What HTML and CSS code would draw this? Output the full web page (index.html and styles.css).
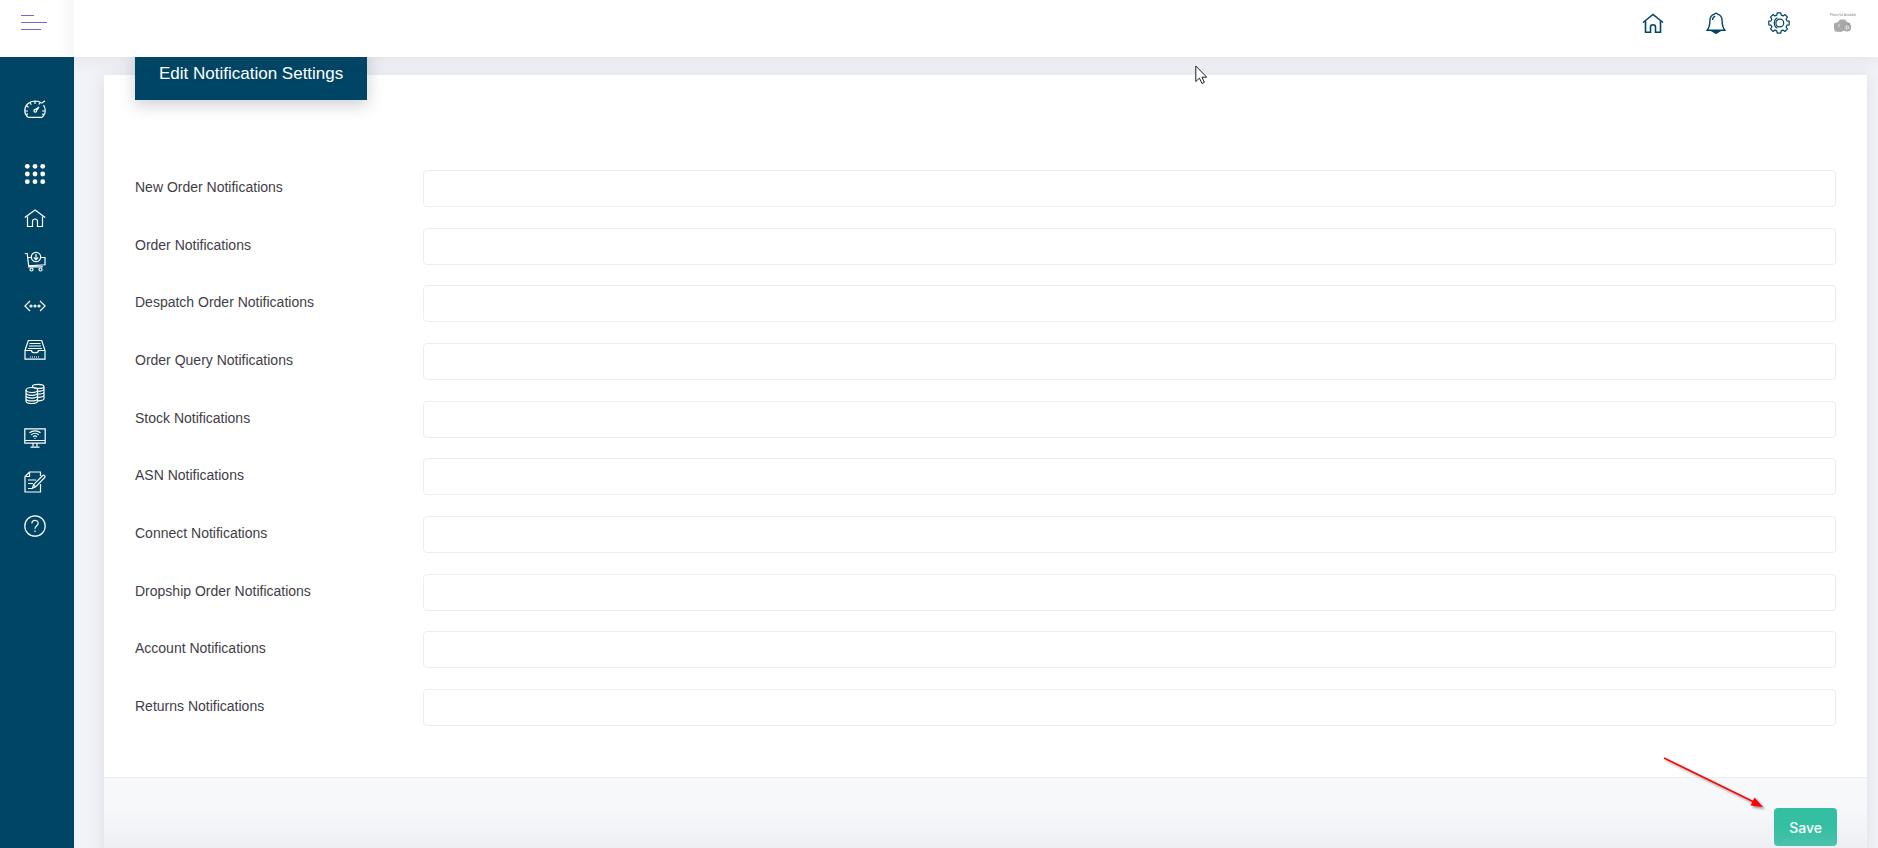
FILE: index.html
```
<!DOCTYPE html>
<html lang="en">
<head>
    <meta charset="UTF-8">
    <meta name="viewport" content="width=device-width, initial-scale=1.0">
    <title>Edit Notification Settings</title>
    <link rel="stylesheet" href="styles.css">
</head>
<body>
    <header class="topbar">
        <div class="brand">
            <button type="button" class="toggler" aria-label="Toggle menu">
                <span></span><span></span><span></span>
            </button>
        </div>
        <nav class="topnav">
            <a href="#" aria-label="Home">
                <svg viewBox="0 0 22 22" stroke-width="1.6"><path d="M1 10.5 11 2.5l10 8M3.5 9v11.2h5v-5a2.5 2.5 0 0 1 5 0v5h5V9"/></svg>
            </a>
            <a href="#" aria-label="Notifications">
                <svg viewBox="0 0 22 22" stroke-width="1.4"><path d="M9.5 2.2a1.6 1.6 0 0 1 3 0c3 .9 4.600 3.300 4.600 6.400 0 5 .6 7.200 2.700 9.600H2.200c2.100-2.400 2.700-4.600 2.700-9.600 0-3.100 1.600-5.500 4.600-6.400zM7.500 8c.1-2 1-3.300 2.700-3.900"/><path fill="currentColor" d="M7.500 19.200h7L11 21.300z"/></svg>
            </a>
            <a href="#" aria-label="Settings">
                <svg viewBox="0 0 22 22" stroke-width="1.2" stroke-linejoin="round"><path d="M9.200.8h3.600l.4 2.300 1.800.8 1.900-1.400 2.600 2.600L18.100 7l.8 1.800 2.300.4v3.600l-2.300.4-.8 1.800 1.400 1.900-2.600 2.600-1.900-1.400-1.800.8-.4 2.300H9.200l-.4-2.300-1.800-.8-1.900 1.400-2.600-2.600L3.900 15l-.8-1.800-2.300-.4V9.200l2.300-.4L3.900 7 2.500 5.100l2.600-2.600L7 3.900l1.800-.8z"/><circle cx="11.800" cy="11" r="3.900"/><path d="M9.500 5.800a5.800 5.800 0 0 0 0 10.400"/></svg>
            </a>
            <a href="#" class="avatar" aria-label="Profile">
                <span>Photo Not Available</span>
                <svg viewBox="0 0 20 14"><path fill="#a9a9a9" d="M1 4.500 5 3l2-2.500h5L14 3l3 1 1 4-2 4-4-1-4 2-6-.5-1-3z"/><circle cx="14" cy="8.500" r="3.600" fill="#b9b9b9" stroke="#999"/><path stroke="#ddd" d="M6 5v3M13.500 6.500v4M15.500 7.500v2"/></svg>
            </a>
        </nav>
    </header>

    <aside class="sidebar">
        <a href="#" class="dashboard" aria-label="Dashboard">
            <svg viewBox="0 0 22 22"><path d="M4 19.300C2.200 17.800.8 15.500.8 12.600.8 7 5.400 3 11 3c2.700 0 5 .8 6.800 2.200M19.500 7.200c1.200 1.500 1.700 3.300 1.700 5.400 0 2.900-1.200 5.200-3.200 6.700H4M11 3v3M6 4.500l1.300 2.200M2.500 8l2.200 1.200M1 13h3M18 13h3M2 16.500l2-.6M18 16l2 .6M16 4.500 14.800 6.500M18 5l3-2.300M12 11l3-2-2 3"/><circle cx="11.300" cy="12.800" r="1.400"/></svg>
        </a>
        <a href="#" aria-label="Apps">
            <svg viewBox="0 0 22 22"><g fill="currentColor" stroke="none"><circle cx="3.300" cy="3.300" r="2.400"/><circle cx="11" cy="3.300" r="2.400"/><circle cx="18.700" cy="3.300" r="2.400"/><circle cx="3.300" cy="11" r="2.400"/><circle cx="11" cy="11" r="2.400"/><circle cx="18.700" cy="11" r="2.400"/><circle cx="3.300" cy="18.700" r="2.400"/><circle cx="11" cy="18.700" r="2.400"/><circle cx="18.700" cy="18.700" r="2.400"/></g></svg>
        </a>
        <a href="#" aria-label="Home">
            <svg viewBox="0 0 22 22"><path d="M.8 10.500 11 3l10.200 7.500M3.500 9.500v10h5v-5a2.500 2.500 0 0 1 5 0v5h5v-10"/></svg>
        </a>
        <a href="#" aria-label="Orders">
            <svg viewBox="0 0 22 22"><path d="M.8 2.500h2.400l1.600 13.300h14M4 6.500h3M16.500 6.500h4.500v7.300l-16 1"/><circle cx="12" cy="6" r="4.700"/><path d="M12 3v5.500M9.800 6.500 12 8.700l2.200-2.200"/><circle cx="7.500" cy="18.500" r="1.500"/><circle cx="16.500" cy="18.500" r="1.500"/></svg>
        </a>
        <a href="#" aria-label="Integrations">
            <svg viewBox="0 0 22 22"><path d="M6 6 .9 11 6 16M16 6l5.100 5-5.100 5"/><circle cx="7" cy="11" r="1"/><circle cx="11" cy="11" r="1"/><circle cx="15" cy="11" r="1"/></svg>
        </a>
        <a href="#" aria-label="Stock">
            <svg viewBox="0 0 22 22"><path d="M1 11.500 4.300 1.500h13.400L21 11.500v8.700H1zM1 11.500h6.500c0 3 7 3 7 0H21M5.500 4.500h11M5 7h12M4 9.500h14"/><path stroke-dasharray="1 1" d="M6 18h10"/></svg>
        </a>
        <a href="#" aria-label="Accounts">
            <svg viewBox="0 0 22 22"><ellipse cx="7.800" cy="7" rx="5.800" ry="2.500"/><path d="M2 7v11c0 1.400 2.600 2.500 5.800 2.500s5.800-1.100 5.800-2.500V7M2 9.800c0 1.400 2.600 2.500 5.800 2.500s5.800-1.100 5.800-2.500M2 12.600c0 1.400 2.600 2.500 5.800 2.500s5.800-1.100 5.800-2.500M2 15.400c0 1.400 2.600 2.500 5.800 2.500s5.800-1.100 5.800-2.500M8.500 4.500V3.300c0-1.200 2.600-2 5.800-2s5.700 1 5.700 2.200v12c0 1.200-2.500 2.200-6 2.300M8.500 3.500c1 1.500 3 1.900 5.800 1.900s5.700-.7 5.700-2M13.600 8.300c3.500 0 6.400-.8 6.400-2.200M13.600 11.200c3.500 0 6.400-.8 6.400-2.200M13.600 14.300c3.500 0 6.400-.8 6.400-2.200"/></svg>
        </a>
        <a href="#" aria-label="Connect">
            <svg viewBox="0 0 22 22"><path d="M.8 1.800h20.400v14.400H.8zM.8 13.500h20.400M9 16.200v3M13 16.200v3M6.500 20.200h9"/><path d="M5.500 5.800c3-2.600 8-2.600 11 0M7.200 7.800c2.200-1.800 5.400-1.800 7.600 0M9 9.700c1.200-1 2.800-1 4 0M10.500 11.300h1"/></svg>
        </a>
        <a href="#" aria-label="Reports">
            <svg viewBox="0 0 22 22"><path d="M16.500 5V1H5.500L1 5.500V21h15.500v-8M1.500 5.500h4v-4M4 9h8M4 12.500h5M4 17.500h5M8.500 17.200l1-3.500 9.200-9.200c1.200-1 3 .7 2 2l-9 9.300zM9.800 14l2 2"/></svg>
        </a>
        <a href="#" aria-label="Help">
            <svg viewBox="0 0 22 22"><circle cx="11" cy="11" r="10.200"/><path d="M7.900 8.500c0-4.200 6.300-4 6.300-.3 0 2.500-3.200 2.600-3.200 5.600M11 15.500v1.500"/></svg>
        </a>
    </aside>

    <main class="content">
        <form class="card">
            <h1 class="card-title">Edit Notification Settings</h1>
            <div class="fields">
                <div class="row">
                    <label for="new-order">New Order Notifications</label>
                    <input type="text" id="new-order">
                </div>
                <div class="row">
                    <label for="order">Order Notifications</label>
                    <input type="text" id="order">
                </div>
                <div class="row">
                    <label for="despatch">Despatch Order Notifications</label>
                    <input type="text" id="despatch">
                </div>
                <div class="row">
                    <label for="query">Order Query Notifications</label>
                    <input type="text" id="query">
                </div>
                <div class="row">
                    <label for="stock">Stock Notifications</label>
                    <input type="text" id="stock">
                </div>
                <div class="row">
                    <label for="asn">ASN Notifications</label>
                    <input type="text" id="asn">
                </div>
                <div class="row">
                    <label for="connect">Connect Notifications</label>
                    <input type="text" id="connect">
                </div>
                <div class="row">
                    <label for="dropship">Dropship Order Notifications</label>
                    <input type="text" id="dropship">
                </div>
                <div class="row">
                    <label for="account">Account Notifications</label>
                    <input type="text" id="account">
                </div>
                <div class="row">
                    <label for="returns">Returns Notifications</label>
                    <input type="text" id="returns">
                </div>
            </div>
            <div class="card-footer">
                <div class="save-wrap">
                    <svg class="arrow" viewBox="0 0 110 60"><path stroke="#ff0000" stroke-width="1.500" d="M1 3l90 44"/><path fill="#ff0000" d="M100 52 87.500 50.500l4-8z"/></svg>
                    <button type="submit" class="save">Save</button>
                </div>
            </div>
        </form>
    </main>

    <svg class="pointer" viewBox="0 0 13 20"><path fill="#fff" stroke="#1c1c2b" d="M.8 1v15.500l3.600-3.400 2.600 5.400 2.400-1.200-2.500-5.100h4.800z"/></svg>
</body>
</html>
```

FILE: styles.css
```
* {
    box-sizing: border-box;
}
body {
    margin: 0;
    height: 100vh;
    overflow: hidden;
    background-color: #f2f3f8;
    font-family: "Liberation Sans", Arial, sans-serif;
    font-size: 14px;
    color: #3f4047;
}
svg {
    display: block;
    fill: none;
}

/* header */
.topbar {
    position: fixed;
    top: 0;
    left: 0;
    right: 0;
    z-index: 3;
    height: 57px;
    display: flex;
    justify-content: space-between;
    background-color: #fff;
    box-shadow: 0 1px 15px 1px rgba(69, 65, 78, 0.1);
}
.brand {
    width: 74px;
    padding: 15px 21px;
    background: linear-gradient(to left, #f7f7f8, #fff 14px);
}
.toggler {
    display: flex;
    flex-direction: column;
    gap: 6px;
    padding: 0;
    border: none;
    background: none;
    cursor: pointer;
}
.toggler span {
    width: 20px;
    height: 1px;
    background-color: #716aca;
}
.toggler span:nth-child(1) {
    width: 13px;
}
.toggler span:nth-child(2) {
    width: 26px;
}
.topnav {
    display: flex;
    height: 45px;
    padding-right: 2px;
}
.topnav a {
    width: 63px;
    display: flex;
    flex-direction: column;
    align-items: center;
    justify-content: center;
    color: #004565;
}
.topnav svg {
    width: 22px;
    height: 22px;
    stroke: currentColor;
}
.topnav .avatar {
    width: 66px;
    color: #888;
    font-size: 3px;
    line-height: 4px;
    text-decoration: none;
    white-space: nowrap;
}
.topnav .avatar svg {
    width: 20px;
    height: 14px;
    margin-top: 2px;
    stroke: none;
}

/* left menu */
.sidebar {
    position: fixed;
    top: 57px;
    bottom: 0;
    left: 0;
    z-index: 4;
    width: 74px;
    padding-top: 30px;
    background-color: #004565;
}
.sidebar a {
    height: 44px;
    display: flex;
    align-items: center;
    justify-content: center;
    padding: 1px 4px 0 0;
    color: #fff;
}
.sidebar .dashboard {
    padding-top: 0;
    margin-bottom: 20px;
}
.sidebar svg {
    width: 22px;
    height: 22px;
    stroke: currentColor;
    stroke-width: 1.2;
}

/* form */
.content {
    padding: 75px 11px 0 104px;
}
.card {
    background-color: #fff;
    box-shadow: 0 1px 15px 1px rgba(69, 65, 78, 0.1);
}
.card-title {
    position: absolute;
    top: 48px;
    left: 135px;
    margin: 0;
    padding: 0 24px;
    font-size: 17px;
    font-weight: normal;
    line-height: 52px;
    color: #fff;
    background-color: #004565;
    box-shadow: 0 5px 15px rgba(69, 65, 78, 0.25);
}
.fields {
    display: flex;
    flex-direction: column;
    justify-content: space-between;
    min-height: 702px;
    padding: 95px 31px 51px;
}
.row {
    display: grid;
    grid-template-columns: 288px 1fr;
}
.row label {
    line-height: 34px;
}
.row input {
    height: 37px;
    padding: 8px 16px;
    border: 1px solid #ebedf2;
    border-radius: 4px;
    font: inherit;
    color: inherit;
    outline: none;
}
.card-footer {
    display: flex;
    justify-content: flex-end;
    padding: 30px;
    border-top: 1px solid #ebedf2;
    background: linear-gradient(#f7f8fa 30px, #eeeff4 72px);
}
.save-wrap {
    position: relative;
}
.save {
    height: 38px;
    padding: 0 15px;
    border: none;
    border-radius: 4px;
    background: linear-gradient(#34bfa3 20px, #4dc1ab);
    color: #fff;
    font-family: Inter, "Open Sans", sans-serif;
    font-size: 14px;
    font-weight: 500;
    cursor: pointer;
}

.arrow {
    position: absolute;
    right: 64px;
    bottom: 31px;
    width: 110px;
    height: 60px;
    filter: drop-shadow(2px 2px 1px rgba(0, 0, 0, 0.4));
}
.pointer {
    position: absolute;
    top: 65px;
    left: 1195px;
    z-index: 5;
    width: 13px;
    height: 20px;
}
```
